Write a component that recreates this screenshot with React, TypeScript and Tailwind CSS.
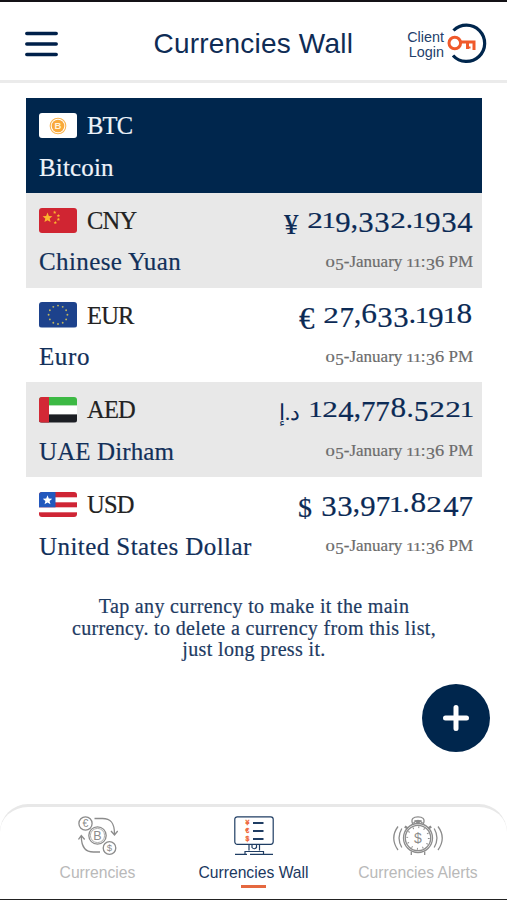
import type { ReactNode } from "react";

type Row = {
  code: string;
  name: string;
  nameClass: string;
  symbol?: string;
  symbolClass?: string;
  amount?: string;
  flag: ReactNode;
};

const STAR =
  "M0,-1 L0.26,-0.36 L0.95,-0.31 L0.42,0.14 L0.59,0.81 L0,0.45 L-0.59,0.81 L-0.42,0.14 L-0.95,-0.31 L-0.26,-0.36 Z";

const BtcFlag = () => (
  <>
    <rect width="38" height="25.5" fill="#fff" />
    <circle cx="19" cy="13" r="7.8" fill="none" stroke="#f9b450" strokeWidth="1.1" />
    <circle cx="19" cy="13" r="6.3" fill="#f9a93a" />
    <text
      x="19"
      y="16.4"
      fontSize="9.5"
      fontWeight="700"
      fontFamily="Liberation Sans"
      textAnchor="middle"
      fill="#fff3dc"
    >
      B
    </text>
  </>
);

const CnyFlag = () => (
  <>
    <rect width="38" height="25.5" fill="#d02532" />
    <path d={STAR} transform="translate(8.5 9.8) scale(5.2)" fill="#fbb52e" />
    <path d={STAR} transform="translate(15.7 4.4) scale(1.8)" fill="#fbb52e" />
    <path d={STAR} transform="translate(19.4 7.7) scale(1.8)" fill="#fbb52e" />
    <path d={STAR} transform="translate(19.4 11.4) scale(1.8)" fill="#fbb52e" />
    <path d={STAR} transform="translate(16.3 14.6) scale(1.8)" fill="#fbb52e" />
  </>
);

const EurFlag = () => (
  <>
    <rect width="38" height="25.5" fill="#1d428c" />
    {Array.from({ length: 12 }, (_, i) => (
      <circle
        key={i}
        cx={19 + 9.4 * Math.sin((i * Math.PI) / 6)}
        cy={12.8 - 9.2 * Math.cos((i * Math.PI) / 6)}
        r="0.95"
        fill="#c0b55e"
      />
    ))}
  </>
);

const AedFlag = () => (
  <>
    <rect width="38" height="8.6" fill="#3cb944" />
    <rect y="8.6" width="38" height="8.8" fill="#fff" />
    <rect y="17.4" width="38" height="8.1" fill="#1c1e24" />
    <rect width="10" height="25.5" fill="#d32936" />
  </>
);

const UsdFlag = () => (
  <>
    <rect width="38" height="25.5" fill="#fff" />
    <rect width="38" height="5.3" fill="#cf2535" />
    <rect y="10.3" width="38" height="5" fill="#cf2535" />
    <rect y="20.3" width="38" height="5.2" fill="#cf2535" />
    <rect width="16.5" height="15.3" fill="#2358bd" />
    <path d={STAR} transform="translate(8.5 8.2) scale(5)" fill="#fff" />
  </>
);

const rows: Row[] = [
  { code: "BTC", name: "Bitcoin", nameClass: "tracking-[0.15px]", flag: <BtcFlag /> },
  {
    code: "CNY",
    name: "Chinese Yuan",
    nameClass: "tracking-[0.4px]",
    symbol: "¥",
    symbolClass: "text-[29px] -mr-px",
    amount: "219,332.1934",
    flag: <CnyFlag />,
  },
  {
    code: "EUR",
    name: "Euro",
    nameClass: "tracking-[0.6px]",
    symbol: "€",
    symbolClass: "text-[31px]",
    amount: "27,633.1918",
    flag: <EurFlag />,
  },
  {
    code: "AED",
    name: "UAE Dirham",
    nameClass: "tracking-[0.1px]",
    symbol: "د.إ",
    symbolClass: "text-[22px] [-webkit-text-stroke:0px]",
    amount: "124,778.5221",
    flag: <AedFlag />,
  },
  {
    code: "USD",
    name: "United States Dollar",
    nameClass: "tracking-[0.43px]",
    symbol: "$",
    symbolClass: "text-[28px]",
    amount: "33,971.8247",
    flag: <UsdFlag />,
  },
];

// old-style figures: 0-2 sit at x-height, 3 4 5 7 9 hang below the baseline
const figures: Record<string, string> = {
  "0": "w-[0.6em] origin-[50%_79%] scale-x-[1.1] scale-y-[0.78]",
  "1": "w-[0.42em] origin-[50%_79%] scale-y-[0.78]",
  "2": "w-[0.555em] origin-[50%_79%] scale-x-[1.08] scale-y-[0.78]",
  "3": "w-[0.545em] translate-y-[0.15em] scale-x-[1.06]",
  "4": "w-[0.555em] translate-y-[0.15em] scale-x-[1.06]",
  "5": "w-[0.515em] translate-y-[0.15em]",
  "6": "w-[0.55em] scale-x-[1.08]",
  "7": "w-[0.495em] translate-y-[0.15em]",
  "8": "w-[0.58em] scale-x-[1.08]",
  "9": "w-[0.55em] translate-y-[0.15em] scale-x-[1.06]",
};

function Figures({ text }: { text: string }) {
  return (
    <span className="whitespace-nowrap">
      {text.split("").map((c, i) =>
        figures[c] ? (
          <span key={i} className={`inline-flex justify-center ${figures[c]}`}>
            {c}
          </span>
        ) : (
          <span key={i}>{c}</span>
        )
      )}
    </span>
  );
}

function CurrencyRow({ row, index }: { row: Row; index: number }) {
  const bg = index === 0 ? "bg-[#00264d]" : index % 2 ? "bg-[#e8e8e8]" : "bg-white";
  return (
    <div className={`flex h-[94.8px] justify-between pl-[13px] pr-[9px] ${bg}`}>
      <div>
        <div className="mt-[14px] flex h-[27px] items-center gap-[10px]">
          <svg width="38" height="25.5" viewBox="0 0 38 25.5" className="rounded-[3px]">
            {row.flag}
          </svg>
          <span
            className={`text-[24.500px] leading-[27px] tracking-[-0.8px] [-webkit-text-stroke:0.2px] ${
              index === 0 ? "text-[#eef3fa]" : "text-[#222]"
            }`}
          >
            {row.code}
          </span>
        </div>
        <div
          className={`mt-[14.500px] whitespace-nowrap text-[25px] leading-[28px] [-webkit-text-stroke:0.2px] ${row.nameClass} ${
            index === 0 ? "text-[#eef3fa]" : "text-[#12305a]"
          }`}
        >
          {row.name}
        </div>
      </div>
      {row.amount && (
        <div className="flex flex-col items-end">
          <div className="mt-[9px] flex h-[34px] gap-[9px] text-[#0b2a55] [-webkit-text-stroke:0.2px]">
            <span className={`mt-[6px] leading-[32px] ${row.symbolClass}`}>{row.symbol}</span>
            <span className="text-[29px] leading-[32px]">
              <Figures text={row.amount} />
            </span>
          </div>
          <div className="mt-[16px] text-[17px] leading-[20px] text-[#6c6c6c] [-webkit-text-stroke:0.2px]">
            <Figures text="05-January 11:36 PM" />
          </div>
        </div>
      )}
    </div>
  );
}

const CurrenciesIcon = () => (
  <svg width="40" height="40" viewBox="0 0 40 40" fill="none" stroke="#8c8c8c" strokeWidth="1.3">
    <circle cx="7.5" cy="7.5" r="6.6" />
    <circle cx="19.5" cy="19.5" r="8.7" />
    <circle cx="19.5" cy="19.5" r="7.1" strokeWidth="0.7" />
    <circle cx="31.5" cy="32" r="6.3" />
    <path d="M16.5 2.500h8c8 0 12 4 12 15.500M33 15l3.500 4 3.200-4M22 36h-6.500C8 36 3.300 32 3.300 20M0.500 23.500L3.300 19.500 6.700 23.500" />
    <g fill="#8c8c8c" stroke="none" fontFamily="Liberation Sans" textAnchor="middle">
      <text x="7.300" y="11.300" fontSize="10.500">€</text>
      <text x="19.500" y="24" fontSize="12.500">B</text>
      <text x="31.500" y="35.400" fontSize="9.500">$</text>
    </g>
  </svg>
);

const WallIcon = () => (
  <svg width="40" height="40" viewBox="0 0 40 40" fill="none" stroke="#1f3d63" strokeWidth="1.2">
    <rect x="0.8" y="0.800" width="38.400" height="27.500" rx="2.500" />
    <path d="M19 7h10.500M19 15h10.500M19 23h10.500" strokeWidth="2" />
    <path d="M15 28.500v6M25.500 28.500v6M18 29v2.500q2 2.500 4.500 0V29M11 38v-2.500h18.500V38M1 38.300h12M16 38.300h23" />
    <g
      fill="#ef6a3e"
      stroke="#ef6a3e"
      strokeWidth="0.3"
      fontFamily="Liberation Sans"
      fontWeight="700"
      fontSize="6.900"
      textAnchor="middle"
    >
      <text x="13.300" y="9.400">¥</text>
      <text x="13.300" y="17.400">€</text>
      <text x="13.300" y="25.400">$</text>
    </g>
  </svg>
);

const AlertsIcon = () => (
  <svg width="50" height="40" viewBox="0 0 50 40" fill="none" stroke="#8c8c8c" strokeWidth="1.3">
    <circle cx="25" cy="22" r="14.500" />
    <circle cx="25" cy="22" r="12.700" />
    <circle cx="25" cy="22" r="10.800" strokeWidth="1.800" strokeDasharray="1 4.655" />
    <path d="M20 8.500C17 2.500 21 0.800 25 0.800s8 1.700 5 7.700M20.500 7q4.500-5 9 0" />
    <path d="M22.500 5h5l-2.500 2.500z" fill="#8c8c8c" />
    <path d="M11.800 10.500l3 2M38.200 10.500l-3 2" strokeWidth="2.500" />
    <path d="M18.300 35.500v3.500M31.700 35.500v3.500" />
    <path d="M8.800 12.500q-5.500 9.500 0 19M5 10.500q-8.500 11.500 0 23.500M41.200 12.500q5.500 9.500 0 19M45 10.500q8.500 11.500 0 23.500" />
    <text
      x="25"
      y="27"
      fontSize="14"
      fontFamily="Liberation Sans"
      textAnchor="middle"
      fill="#8c8c8c"
      stroke="none"
    >
      $
    </text>
  </svg>
);

export default function App() {
  return (
    <div className="flex h-[900px] w-[507px] flex-col overflow-hidden border-b border-[#222] bg-white font-['Liberation_Serif',serif]">
      <header className="flex h-[83px] shrink-0 items-center border-b-[3px] border-t-2 border-b-[#ebebeb] border-t-[#141216] pl-[25px] pr-[19px] pb-px font-['Liberation_Sans',sans-serif]">
        <svg width="33" height="26" viewBox="0 0 33 26" className="mt-[6px]">
          <path
            d="M1.800 2.500h29.400M1.800 13h29.400M1.800 23.500h29.400"
            stroke="#00204a"
            strokeWidth="3.500"
            strokeLinecap="round"
          />
        </svg>
        <h1 className="ml-[95.500px] mt-[6px] whitespace-nowrap text-[28px] leading-[32px] tracking-[0.2px] text-[#0f2c55]">
          Currencies Wall
        </h1>
        <div className="ml-auto mt-[7px] flex items-center gap-[3px]">
          <div className="mt-[2px] text-right text-[14.4px] leading-[15.5px] text-[#23406b]">
            Client
            <br />
            Login
          </div>
          <svg width="41" height="42" viewBox="0 0 41 42" fill="none">
            <path d="M6.500 7.500A18.200 18.200 0 1 1 6 32.500" stroke="#00264d" strokeWidth="3.200" />
            <circle cx="7.800" cy="20" r="5.800" stroke="#f0592a" strokeWidth="3" />
            <path d="M14 19h14.500M27 19v8M20.500 19v7" stroke="#f0592a" strokeWidth="3" />
            <path d="M20.500 24.500h3" stroke="#f0592a" strokeWidth="2" />
          </svg>
        </div>
      </header>

      <main className="flex flex-1 flex-col pl-[26px] pr-[25px] pt-[15px]">
        {rows.map((row, i) => (
          <CurrencyRow key={row.code} row={row} index={i} />
        ))}
        <p className="mt-[24.500px] text-center text-[20px] leading-[21.3px] tracking-[0.35px] text-[#1d3a62] [-webkit-text-stroke:0.2px]">
          Tap any currency to make it the main
          <br />
          currency. to delete a currency from this list,
          <br />
          just long press it.
        </p>
        <button className="-mr-[7.5px] mt-[23.500px] flex size-[68px] items-center justify-center self-end rounded-full bg-[#00264d]">
          <svg width="26" height="26" viewBox="0 0 26 26">
            <path d="M13 2.500v21M2.500 13h21" stroke="#fff" strokeWidth="5" strokeLinecap="round" />
          </svg>
        </button>
      </main>

      <nav className="flex h-[95px] shrink-0 rounded-t-[28px] border-t-[3px] border-[#e8e8e8] pl-[59px] pt-[9px] font-['Liberation_Sans',sans-serif] text-[15.700px] leading-[18px]">
        <div className="flex w-[77px] flex-col items-center text-[#b9b9b9]">
          <CurrenciesIcon />
          <span className="mt-[8px]">Currencies</span>
        </div>
        <div className="ml-[57.5px] flex w-[120px] flex-col items-center whitespace-nowrap text-[#1b3860]">
          <WallIcon />
          <span className="mt-[8px]">Currencies Wall</span>
          <span className="mt-[3px] h-[2.500px] w-[25px] bg-[#e5683f]" />
        </div>
        <div className="ml-[44.5px] flex w-[120px] flex-col items-center whitespace-nowrap text-[#b9b9b9]">
          <AlertsIcon />
          <span className="mt-[8px]">Currencies Alerts</span>
        </div>
      </nav>
    </div>
  );
}
